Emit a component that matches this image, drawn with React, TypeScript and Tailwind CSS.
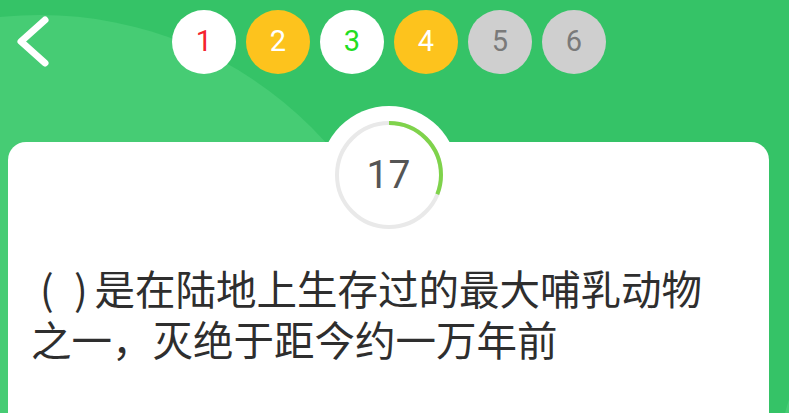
const steps = [
  { n: 1, bg: 'bg-white', fg: 'text-[#f5222d]' },
  { n: 2, bg: 'bg-[#fdc31d]', fg: 'text-white' },
  { n: 3, bg: 'bg-white', fg: 'text-[#22dd22]' },
  { n: 4, bg: 'bg-[#fdc31d]', fg: 'text-white' },
  { n: 5, bg: 'bg-[#cfcfcf]', fg: 'text-[#7a7a7a]' },
  { n: 6, bg: 'bg-[#cfcfcf]', fg: 'text-[#7a7a7a]' },
]

const seconds = 17
const progress = 0.31
const r = 52
const circ = 2 * Math.PI * r

const question =
  '(\u2002)\u2006是在陆地上生存过的最大哺乳动物之一，灭绝于距今约一万年前'

export default function App() {
  return (
    <div className="relative h-[413px] w-full overflow-hidden bg-[#35c367] font-['Noto_Sans_CJK_SC',sans-serif]">
      {/* Background arcs */}
      <div className="absolute left-[-344px] top-[15px] h-[768px] w-[768px] rounded-full bg-[#46cc74]" />
      <div className="absolute left-[775px] top-[190px] h-[600px] w-[600px] rounded-full bg-[#46cc74]" />

      <div className="relative">
        {/* Header */}
        <div className="flex pt-[10px]">
          <div className="-mt-[10px] w-[172px]">
            <svg width="60" height="80" viewBox="0 0 60 80" fill="none">
              <path
                d="M45 20 L21 41.5 L45 63"
                stroke="white"
                strokeWidth="7"
                strokeLinecap="round"
                strokeLinejoin="round"
              />
            </svg>
          </div>
          <div className="flex gap-[10px]">
            {steps.map((s) => (
              <div
                key={s.n}
                className={`flex h-[64px] w-[64px] items-center justify-center rounded-full font-['Roboto',sans-serif] text-[29px] ${s.bg} ${s.fg}`}
              >
                {s.n}
              </div>
            ))}
          </div>
        </div>

        {/* Card */}
        <div className="ml-[8px] mr-[20px] mt-[62px] h-[300px] rounded-t-[18px] bg-white">
          <div className="flex justify-center">
            <div className="-mt-[36px] flex h-[138px] w-[138px] items-center justify-center rounded-full bg-white">
              <div className="relative flex h-[108px] w-[108px] items-center justify-center">
                <svg
                  className="absolute inset-0"
                  width="108"
                  height="108"
                  viewBox="0 0 108 108"
                >
                  <circle
                    cx="54"
                    cy="54"
                    r={r}
                    fill="none"
                    stroke="#e9e9e9"
                    strokeWidth="4"
                  />
                  <circle
                    cx="54"
                    cy="54"
                    r={r}
                    fill="none"
                    stroke="#7fd34b"
                    strokeWidth="4"
                    strokeDasharray={`${circ * progress} ${circ}`}
                    transform="rotate(-90 54 54)"
                  />
                </svg>
                <span className="relative font-['Roboto',sans-serif] text-[39px] text-[#555]">
                  {seconds}
                </span>
              </div>
            </div>
          </div>

          <p className="mt-[18px] pl-[23px] pr-[36px] indent-[9px] text-[40.5px] leading-[51px] text-[#2e2e2e]">
            {question}
          </p>
        </div>
      </div>
    </div>
  )
}
